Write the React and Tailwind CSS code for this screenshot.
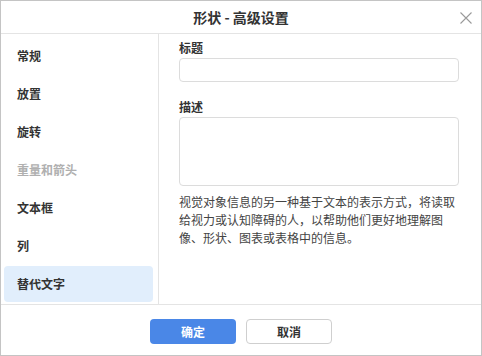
import React from 'react'

const NAV = [
  { label: '常规' },
  { label: '放置' },
  { label: '旋转' },
  { label: '重量和箭头', disabled: true },
  { label: '文本框' },
  { label: '列' },
  { label: '替代文字', active: true },
]

export default function App() {
  return (
    <div
      className="w-[482px] h-[356px] bg-white border border-[#c4c4c4] flex flex-col text-[#333]"
      style={{ fontFamily: '"Noto Sans CJK SC", "Noto Sans", sans-serif' }}
    >
      {/* Header */}
      <div className="h-[33px] shrink-0 border-b border-[#e4e4e4] relative flex items-center justify-center">
        <span className="text-[14px] font-bold leading-none">形状 - 高级设置</span>
        <button className="absolute right-[9px] top-[11px] w-[12px] h-[12px] flex items-center justify-center">
          <svg width="12" height="12" viewBox="0 0 12 12" fill="none" stroke="#9a9a9a" strokeWidth="1.1">
            <path d="M0.5 0.5 L11.5 11.5 M11.5 0.5 L0.5 11.5" />
          </svg>
        </button>
      </div>

      {/* Body */}
      <div className="h-[270px] shrink-0 flex">
        <div className="w-[158px] shrink-0 border-r border-[#e4e4e4] pt-[4px] pl-[3px] pr-[5px] flex flex-col gap-[2px]">
          {NAV.map((item) => (
            <div
              key={item.label}
              className={
                'h-[36px] shrink-0 rounded-[4px] pl-[13px] flex items-center text-[12px] font-bold ' +
                (item.active ? 'bg-[#e1eefc] ' : '') +
                (item.disabled ? 'text-[#b0b0b0]' : 'text-[#333]')
              }
            >
              {item.label}
            </div>
          ))}
        </div>

        <div className="flex-1 pt-[4px] pl-[20px] pr-[22px]">
          <div className="h-[20px] leading-[20px] text-[12px] font-bold">标题</div>
          <div className="h-[24px] rounded-[4px] border border-[#dcdcdc]" />

          <div className="mt-[15px] h-[20px] leading-[20px] text-[12px] font-bold">描述</div>
          <div className="h-[69px] rounded-[4px] border border-[#dcdcdc]" />

          <p className="mt-[7px] text-[12px] leading-[18px] text-[#444]">
            视觉对象信息的另一种基于文本的表示方式，将读取给视力或认知障碍的人，以帮助他们更好地理解图像、形状、图表或表格中的信息。
          </p>
        </div>
      </div>

      {/* Footer */}
      <div className="flex-1 border-t border-[#e4e4e4] flex justify-center items-start pt-[14px] gap-[10px]">
        <button className="w-[86px] h-[25px] rounded-[4px] bg-[#4a87e7] text-white text-[12px] font-bold flex items-center justify-center">
          确定
        </button>
        <button className="w-[86px] h-[25px] rounded-[4px] bg-white border border-[#cfcfcf] text-[#333] text-[12px] font-bold flex items-center justify-center">
          取消
        </button>
      </div>
    </div>
  )
}
